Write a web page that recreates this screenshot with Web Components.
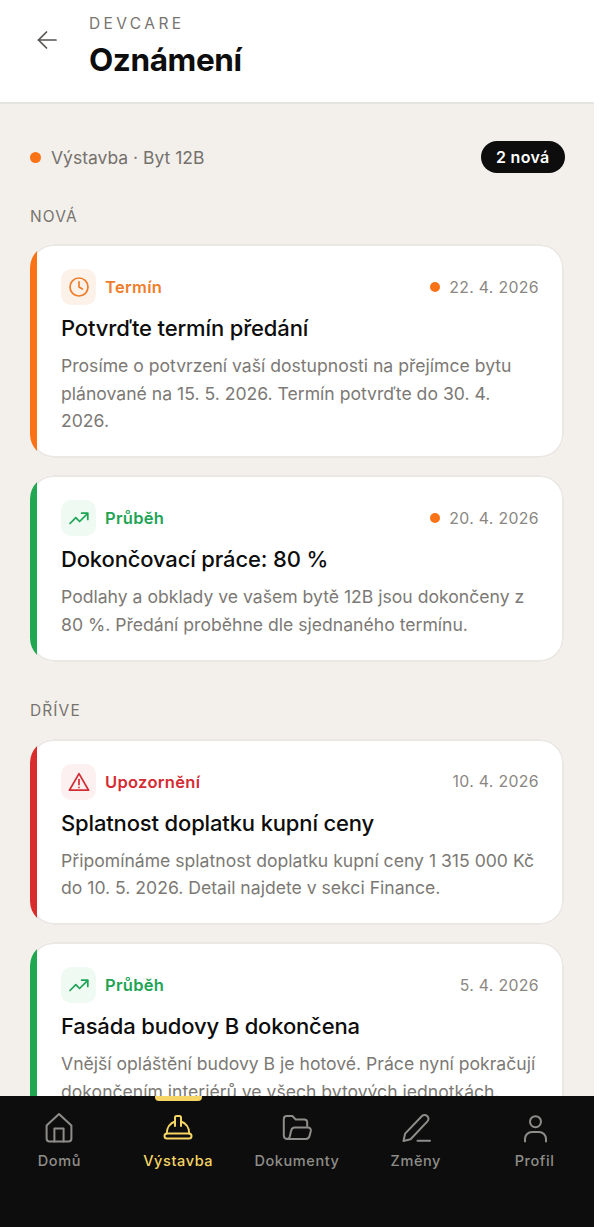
<!DOCTYPE html>
<html lang="cs">
<head>
<meta charset="utf-8">
<title>Oznámení</title>
<style>
  html, body { margin: 0; height: 100%; background: #fff; }
  body { font-family: Inter, "Noto Sans", sans-serif; overflow: hidden; }
  #app { width: 594px; height: 1227px; display: flex; flex-direction: column; background: #f3f0ec; }
  #scroll { flex: 1; min-height: 0; overflow: hidden; padding: 37px 30px 0; box-sizing: border-box; display: flex; flex-direction: column; }
</style>
</head>
<body>
<div id="app">
  <app-header brand="DEVCARE" heading="Oznámení"></app-header>
  <div id="scroll">
    <status-row count="2 nová">Výstavba · Byt 12B</status-row>
    <section-label>NOVÁ</section-label>
    <notice-card kind="termin" tag="Termín" date="22. 4. 2026" unread heading="Potvrďte termín předání">Prosíme o potvrzení vaší dostupnosti na přejímce bytu plánované na 15. 5. 2026. Termín potvrďte do 30. 4. 2026.</notice-card>
    <notice-card kind="prubeh" tag="Průběh" date="20. 4. 2026" unread heading="Dokončovací práce: 80 %">Podlahy a obklady ve vašem bytě 12B jsou dokončeny z 80 %. Předání proběhne dle sjednaného termínu.</notice-card>
    <section-label later>DŘÍVE</section-label>
    <notice-card kind="upozorneni" tag="Upozornění" date="10. 4. 2026" heading="Splatnost doplatku kupní ceny">Připomínáme splatnost doplatku kupní ceny 1 315 000 Kč do 10. 5. 2026. Detail najdete v sekci Finance.</notice-card>
    <notice-card kind="prubeh" tag="Průběh" date="5. 4. 2026" heading="Fasáda budovy B dokončena">Vnější opláštění budovy B je hotové. Práce nyní pokračují dokončením interiérů ve všech bytových jednotkách.</notice-card>
  </div>
  <tab-bar>
    <tab-item icon="home" label="Domů"></tab-item>
    <tab-item icon="hat" label="Výstavba" active></tab-item>
    <tab-item icon="folder" label="Dokumenty"></tab-item>
    <tab-item icon="pen" label="Změny"></tab-item>
    <tab-item icon="user" label="Profil"></tab-item>
  </tab-bar>
</div>

<script>
const KINDS = {
  termin: { color: '#ef7d2b', bar: '#f97316', bg: '#fdf2e9', icon: '<circle cx="12" cy="12" r="9"/><path d="M12 6.800V12l3.400 2"/>' },
  prubeh: { color: '#1fa455', bar: '#1fa751', bg: '#eefaf2', icon: '<path d="M3 17.500l5.800-5.800 3.800 3.800L20.500 7.600"/><path d="M14.600 7.200h6.200v6.200"/>' },
  upozorneni: { color: '#d42c34', bar: '#d92d2d', bg: '#fdf0f0', icon: '<path d="M12 3.600L2.400 20.200h19.200z"/><path d="M12 9.600v5"/><path d="M12 17.400v.1"/>' }
};

const TAB_ICONS = {
  home: '<svg width="30" height="30" viewBox="0 0 30 30"><path d="M2.600 24.600V11.400L15 0l12.400 11.400v13.200a3 3 0 0 1-3 3H5.600a3 3 0 0 1-3-3z"/><path d="M10.400 27.600V14.500h9.200v13.100"/></svg>',
  hat: '<svg width="30" height="30" viewBox="0 0 30 30"><rect x="1.500" y="19.500" width="27" height="5" rx="2.500"/><path d="M3.800 19.500c0-5.800 3.400-10.400 8.200-12M26.200 19.500c0-5.800-3.400-10.400-8.200-12"/><path d="M12 12V3.600A1.600 1.600 0 0 1 13.600 2h2.800A1.600 1.600 0 0 1 18 3.600V12"/></svg>',
  folder: '<svg width="30" height="30" viewBox="0 0 30 30"><path d="M5 25a3.500 3.500 0 0 1-3.200-3.500V5a3 3 0 0 1 3-3h5.600l3.400 3.600h8.400a3 3 0 0 1 3 3V12"/><path d="M5 25c1.500 0 2.400-1 2.800-2.400l1.400-6c.5-2 1.800-3 3.600-3H26c2 0 3.200 1.600 2.800 3.400l-1.200 4.800c-.5 1.900-1.800 3.200-3.800 3.200z"/></svg>',
  pen: '<svg width="32" height="32" viewBox="0 0 32 32"><path d="M3.500 28l1.600-7.400L22 3a3.600 3.600 0 0 1 5.100 0l.3.3a3.600 3.600 0 0 1 0 5.100L10.600 26.300z"/><path d="M17.500 27.700H30"/></svg>',
  user: '<svg width="30" height="30" viewBox="0 0 30 30"><circle cx="15.500" cy="7.700" r="5.500"/><path d="M5 27.500V25a7 7 0 0 1 7-7h7a7 7 0 0 1 7 7v2.500"/></svg>'
};

class AppHeader extends HTMLElement {
  constructor() {
    super();
    this.attachShadow({ mode: 'open' });
  }
  connectedCallback() {
    this.shadowRoot.innerHTML = `
      <style>
        :host { display: flex; flex: none; height: 104px; box-sizing: border-box; background: #fff; border-bottom: 2px solid #e6e4e1; padding: 15px 0 0 36px; }
        svg { width: 22px; height: 22px; margin-top: 14px; flex: none; fill: none; stroke: #55524f; stroke-width: 1.700; stroke-linecap: round; stroke-linejoin: round; }
        .text { margin-left: 31px; }
        .brand { font-size: 15.500px; line-height: 18px; letter-spacing: 3.400px; color: #77736e; }
        h1 { margin: 8px 0 0; font-size: 31.500px; line-height: 38px; font-weight: 700; letter-spacing: -0.400px; color: #0d0d0d; }
      </style>
      <svg viewBox="0 0 22 22"><path d="M20 11H2.500"/><path d="M10.500 3l-8 8 8 8"/></svg>
      <div class="text">
        <div class="brand">${this.getAttribute('brand')}</div>
        <h1>${this.getAttribute('heading')}</h1>
      </div>`;
  }
}

class StatusRow extends HTMLElement {
  constructor() {
    super();
    this.attachShadow({ mode: 'open' });
  }
  connectedCallback() {
    this.shadowRoot.innerHTML = `
      <style>
        :host { display: flex; align-items: center; flex: none; height: 32px; margin-right: -1px; font-size: 17.500px; color: #75716c; }
        .dot { width: 11px; height: 11px; border-radius: 50%; background: #f97316; margin-right: 10px; }
        .label { flex: 1; }
        .count { background: #0d0d0d; color: #fff; border-radius: 16px; height: 32px; line-height: 32px; padding: 0 15.500px; font-size: 16px; font-weight: 600; letter-spacing: 0.300px; }
      </style>
      <span class="dot"></span>
      <span class="label"><slot></slot></span>
      <span class="count">${this.getAttribute('count')}</span>`;
  }
}

class SectionLabel extends HTMLElement {
  constructor() {
    super();
    this.attachShadow({ mode: 'open' });
  }
  connectedCallback() {
    this.shadowRoot.innerHTML = `
      <style>
        :host { display: block; flex: none; margin: 33.500px 0 17.500px; font-size: 15.500px; line-height: 20px; letter-spacing: 1.100px; color: #77736e; }
        :host([later]) { margin: 22px 0 18px; }
      </style>
      <slot></slot>`;
  }
}

class NoticeCard extends HTMLElement {
  constructor() {
    super();
    this.attachShadow({ mode: 'open' });
  }
  connectedCallback() {
    const kind = KINDS[this.getAttribute('kind')];
    const dot = this.hasAttribute('unread') ? '<span class="dot"></span>' : '';
    this.shadowRoot.innerHTML = `
      <style>
        :host { display: block; flex: none; position: relative; overflow: hidden; box-sizing: border-box; background: #fff; border-radius: 24px; padding: 25px 25px 23.500px 31px; margin-bottom: 17px; }
        /* hairline round the card, then the accent clipped by the corner */
        :host::after { content: ""; position: absolute; inset: 0; border: 2px solid #ebe8e4; border-radius: 24px; }
        :host::before { content: ""; position: absolute; z-index: 1; left: 0; top: 0; bottom: 0; width: 7px; background: ${kind.bar}; }
        .top { display: flex; align-items: center; height: 36px; }
        .icon { width: 35px; height: 36px; border-radius: 10px; background: ${kind.bg}; display: flex; align-items: center; justify-content: center; }
        .icon svg { width: 24px; height: 24px; fill: none; stroke: ${kind.color}; stroke-width: 1.700; stroke-linecap: round; stroke-linejoin: round; }
        .tag { margin-left: 9px; flex: 1; font-size: 16.500px; font-weight: 600; letter-spacing: 0.300px; color: ${kind.color}; }
        .dot { width: 10px; height: 10px; border-radius: 50%; background: #f97316; margin-right: 9px; }
        .date { font-size: 15.800px; letter-spacing: 0.350px; color: #8a8782; }
        h2 { margin: 9px 0 0; font-size: 22px; line-height: 28px; font-weight: 550; letter-spacing: -0.150px; color: #0d0d0d; }
        p { margin: 10px 0 0; font-size: 17.600px; line-height: 27.500px; color: #7c7975; }
      </style>
      <div class="top">
        <span class="icon"><svg viewBox="0 0 24 24">${kind.icon}</svg></span>
        <span class="tag">${this.getAttribute('tag')}</span>
        ${dot}<span class="date">${this.getAttribute('date')}</span>
      </div>
      <h2>${this.getAttribute('heading')}</h2>
      <p><slot></slot></p>`;
  }
}

class TabBar extends HTMLElement {
  constructor() {
    super();
    this.attachShadow({ mode: 'open' });
  }
  connectedCallback() {
    this.shadowRoot.innerHTML = `
      <style>
        :host { display: grid; grid-template-columns: repeat(5, 1fr); flex: none; height: 131px; background: #0d0d0d; }
      </style>
      <slot></slot>`;
  }
}

class TabItem extends HTMLElement {
  constructor() {
    super();
    this.attachShadow({ mode: 'open' });
  }
  connectedCallback() {
    this.shadowRoot.innerHTML = `
      <style>
        :host { display: flex; flex-direction: column; align-items: center; position: relative; padding-top: 17px; color: #8f8d8a; font-size: 14.500px; font-weight: 500; letter-spacing: 0.600px; }
        :host([active]) { color: #f5d565; }
        :host([active])::before { content: ""; position: absolute; top: 0; left: 50%; width: 47px; height: 5px; margin-left: -23.500px; background: #f5d565; border-radius: 0 0 4px 4px; }
        .glyph { height: 32px; display: flex; align-items: center; justify-content: center; }
        svg { display: block; overflow: visible; fill: none; stroke: currentColor; stroke-width: 2; stroke-linecap: round; stroke-linejoin: round; }
        .label { margin-top: 6.500px; line-height: 18px; }
      </style>
      <span class="glyph">${TAB_ICONS[this.getAttribute('icon')]}</span>
      <span class="label">${this.getAttribute('label')}</span>`;
  }
}

customElements.define('app-header', AppHeader);
customElements.define('status-row', StatusRow);
customElements.define('section-label', SectionLabel);
customElements.define('notice-card', NoticeCard);
customElements.define('tab-bar', TabBar);
customElements.define('tab-item', TabItem);
</script>
</body>
</html>
